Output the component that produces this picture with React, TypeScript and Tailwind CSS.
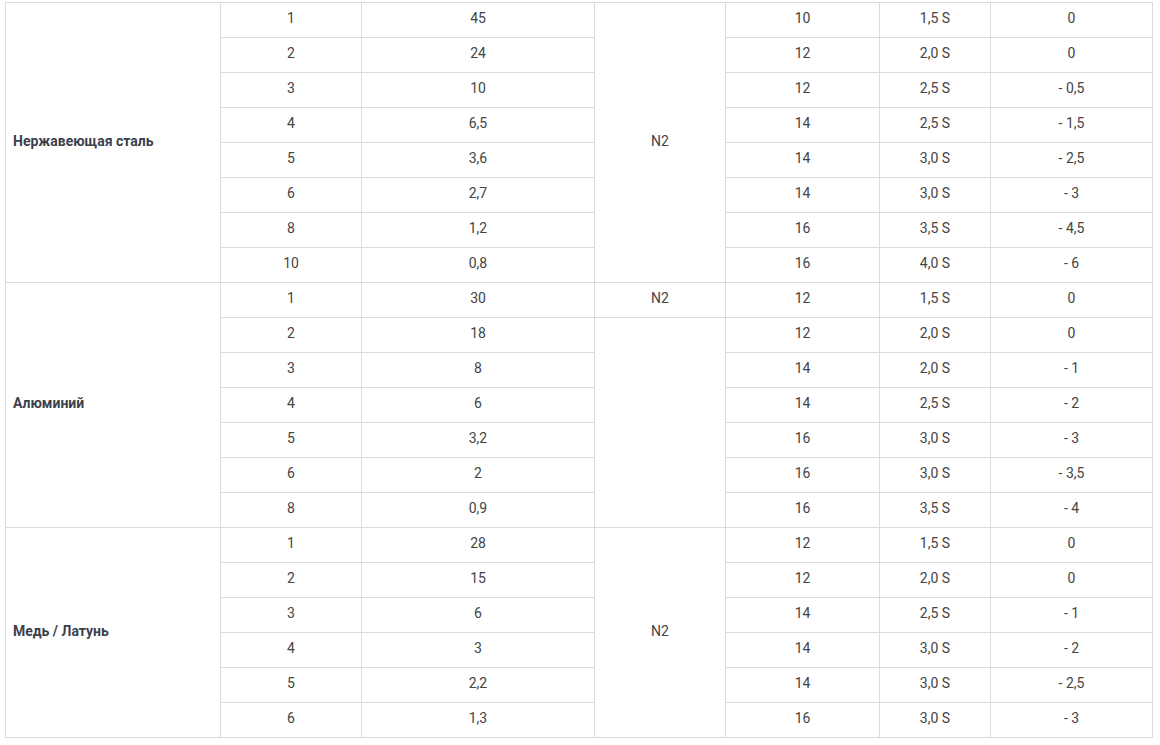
import React from "react";

// One row of the table: length/thickness, speed, nozzle, pressure, focus
type Row = [string, string, string, string, string];

interface Group {
  material: string;
  gas: "all" | "first";
  rows: Row[];
}

const groups: Group[] = [
  {
    material: "Нержавеющая сталь",
    gas: "all",
    rows: [
      ["1", "45", "10", "1,5 S", "0"],
      ["2", "24", "12", "2,0 S", "0"],
      ["3", "10", "12", "2,5 S", "- 0,5"],
      ["4", "6,5", "14", "2,5 S", "- 1,5"],
      ["5", "3,6", "14", "3,0 S", "- 2,5"],
      ["6", "2,7", "14", "3,0 S", "- 3"],
      ["8", "1,2", "16", "3,5 S", "- 4,5"],
      ["10", "0,8", "16", "4,0 S", "- 6"],
    ],
  },
  {
    material: "Алюминий",
    gas: "first",
    rows: [
      ["1", "30", "12", "1,5 S", "0"],
      ["2", "18", "12", "2,0 S", "0"],
      ["3", "8", "14", "2,0 S", "- 1"],
      ["4", "6", "14", "2,5 S", "- 2"],
      ["5", "3,2", "16", "3,0 S", "- 3"],
      ["6", "2", "16", "3,0 S", "- 3,5"],
      ["8", "0,9", "16", "3,5 S", "- 4"],
    ],
  },
  {
    material: "Медь / Латунь",
    gas: "all",
    rows: [
      ["1", "28", "12", "1,5 S", "0"],
      ["2", "15", "12", "2,0 S", "0"],
      ["3", "6", "14", "2,5 S", "- 1"],
      ["4", "3", "14", "3,0 S", "- 2"],
      ["5", "2,2", "14", "3,0 S", "- 2,5"],
      ["6", "1,3", "16", "3,0 S", "- 3"],
    ],
  },
];

const cell = "border border-[#d5dde3] h-[35px] p-0 pb-[3px] text-center align-middle";

export default function App() {
  return (
    <div className="min-h-[745px] bg-white pl-[5px] pt-[2px] font-['Roboto',sans-serif] text-[14px] text-[#444]">
      <table className="table-fixed border-collapse w-[1147px]">
        <colgroup>
          <col className="w-[215px]" />
          <col className="w-[141px]" />
          <col className="w-[233px]" />
          <col className="w-[131px]" />
          <col className="w-[154px]" />
          <col className="w-[111px]" />
          <col className="w-[162px]" />
        </colgroup>
        <tbody>
          {groups.map((g) =>
            g.rows.map((r, i) => (
              <tr key={g.material + i}>
                {i === 0 && (
                  <td
                    rowSpan={g.rows.length}
                    className="border border-[#d5dde3] pl-[7px] pb-[3px] align-middle font-bold text-[#3d3f4d]"
                  >
                    {g.material}
                  </td>
                )}
                <td className={cell}>{r[0]}</td>
                <td className={cell}>{r[1]}</td>
                {g.gas === "all" && i === 0 && (
                  <td rowSpan={g.rows.length} className={cell}>
                    N2
                  </td>
                )}
                {g.gas === "first" && i === 0 && <td className={cell}>N2</td>}
                {g.gas === "first" && i === 1 && (
                  <td rowSpan={g.rows.length - 1} className={cell}></td>
                )}
                <td className={cell}>{r[2]}</td>
                <td className={cell}>{r[3]}</td>
                <td className={cell}>{r[4]}</td>
              </tr>
            ))
          )}
        </tbody>
      </table>
    </div>
  );
}
